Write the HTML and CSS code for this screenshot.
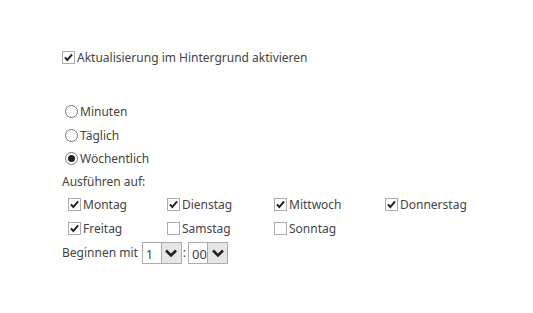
FILE: index.html
```html
<!DOCTYPE html>
<html>
<head>
	<title>Aktualisierung</title>
	<meta charset="utf-8">
	<link rel="stylesheet" href="styles.css">
</head>
<body>
	<div class="panel">
		<label class="row main">
			<span class="box checked"><svg viewBox="0 0 13 13"><path d="M2.3 6.3 L5.1 9.5 L10.7 2.8"/></svg></span>
			Aktualisierung im Hintergrund aktivieren
		</label>

		<div class="radios">
			<label class="row"><span class="radio"></span>Minuten</label>
			<label class="row"><span class="radio"></span>Täglich</label>
			<label class="row"><span class="radio on"></span>Wöchentlich</label>
		</div>

		<div class="row label">Ausführen auf:</div>
		<div class="days">
			<label class="row"><span class="box checked"><svg viewBox="0 0 13 13"><path d="M2.3 6.3 L5.1 9.5 L10.7 2.8"/></svg></span>Montag</label>
			<label class="row"><span class="box checked"><svg viewBox="0 0 13 13"><path d="M2.3 6.3 L5.1 9.5 L10.7 2.8"/></svg></span>Dienstag</label>
			<label class="row"><span class="box checked"><svg viewBox="0 0 13 13"><path d="M2.3 6.3 L5.1 9.5 L10.7 2.8"/></svg></span>Mittwoch</label>
			<label class="row"><span class="box checked"><svg viewBox="0 0 13 13"><path d="M2.3 6.3 L5.1 9.5 L10.7 2.8"/></svg></span>Donnerstag</label>
			<label class="row"><span class="box checked"><svg viewBox="0 0 13 13"><path d="M2.3 6.3 L5.1 9.5 L10.7 2.8"/></svg></span>Freitag</label>
			<label class="row"><span class="box"></span>Samstag</label>
			<label class="row"><span class="box"></span>Sonntag</label>
		</div>

		<div class="row start">
			Beginnen mit
			<span class="pick"><span class="val">1</span><span class="arrow"><svg viewBox="0 0 14 10"><path d="M2 2.5 L7 7.5 L12 2.5"/></svg></span></span>
			<span class="colon">:</span>
			<span class="pick"><span class="val">00</span><span class="arrow"><svg viewBox="0 0 14 10"><path d="M2 2.5 L7 7.5 L12 2.5"/></svg></span></span>
		</div>
	</div>
</body>
</html>
```

FILE: styles.css
```css
html, body {
	margin: 0;
	padding: 0;
	background: #fff;
	color: #444;
	font-family: "Noto Sans", sans-serif;
	font-size: 12px;
}

.panel {
	padding: 45px 0 0 62px;
}

.row {
	display: flex;
	align-items: center;
	height: 24px;
	white-space: nowrap;
}

.main {
	margin-bottom: 31px;
}

.radios .row {
	height: 23.5px;
}

.label {
	height: 22px;
}

.box {
	box-sizing: border-box;
	width: 13px;
	height: 13px;
	border: 1px solid #ababab;
	background: #fff;
	margin-right: 2px;
	flex: none;
	display: flex;
}

.box svg {
	width: 11px;
	height: 11px;
	display: none;
}

.box.checked svg {
	display: block;
}

.box path {
	fill: none;
	stroke: #222;
	stroke-width: 2.4;
}

.radios {
	padding-left: 3px;
}

.radio {
	box-sizing: border-box;
	width: 13px;
	height: 13px;
	border: 1px solid #777;
	border-radius: 50%;
	margin-right: 2px;
	flex: none;
	display: flex;
	align-items: center;
	justify-content: center;
}

.radio.on::after {
	content: "";
	width: 7px;
	height: 7px;
	border-radius: 50%;
	background: #222;
}

.days {
	display: grid;
	grid-template-columns: 99px 107px 111px auto;
	padding-left: 6px;
}

.start .pick {
	margin-left: 4px;
}

.pick {
	box-sizing: border-box;
	display: flex;
	height: 22px;
	width: 40px;
	border: 1px solid #ababab;
	background: #fff;
}

.pick .val {
	flex: 1;
	padding: 3px 0 0 3px;
	line-height: 16px;
	font-size: 13px;
}

.pick .arrow {
	width: 19px;
	background: #e6e6e6;
	border-left: 1px solid #ababab;
	display: flex;
	align-items: center;
	justify-content: center;
}

.arrow svg {
	width: 14px;
	height: 10px;
}

.arrow path {
	fill: none;
	stroke: #222;
	stroke-width: 2.6;
}

.colon {
	margin: 0 2px 0 1px;
}

.start .colon + .pick {
	margin-left: 0;
}
```
